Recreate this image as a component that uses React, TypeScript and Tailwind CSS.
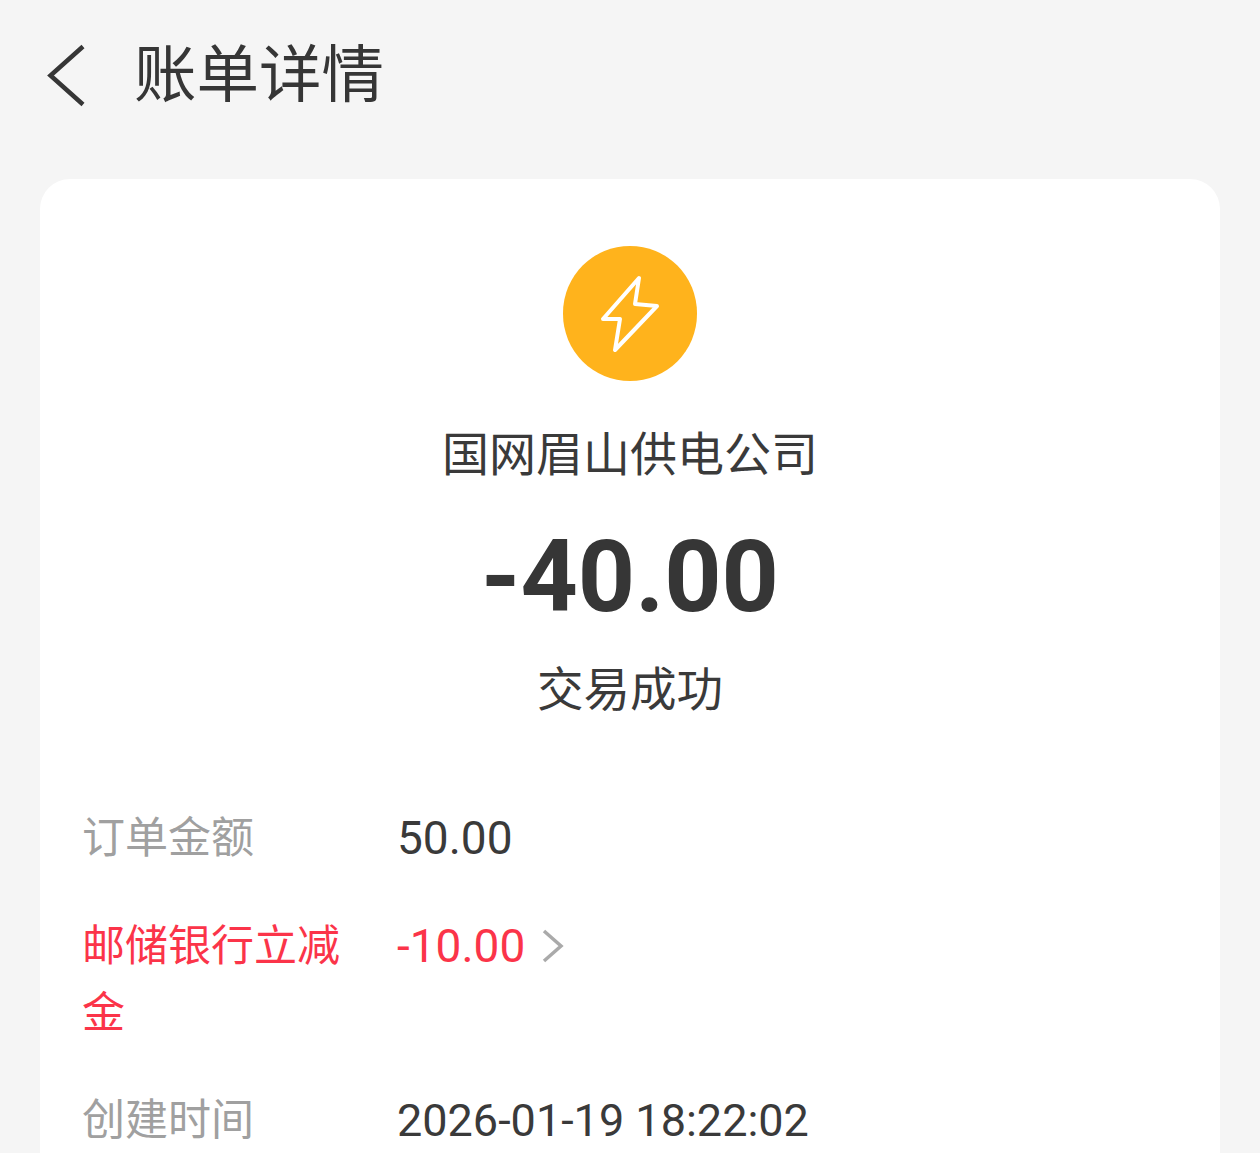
import React from "react";

const font = { fontFamily: '"Roboto", "Noto Sans CJK SC", sans-serif' };

const Row = ({ label, value, red, arrow, small }: { label: string; value: string; red?: boolean; arrow?: boolean; small?: boolean }) => (
  <div className={`flex items-start pb-[40.5px] text-[43px] leading-[67px] ${red ? "text-[#fb3449]" : ""}`}>
    <div className={`w-[315px] shrink-0 pr-[50px] break-all ${red ? "" : "text-[#a0a0a0]"}`}>{label}</div>
    <div className={`flex items-center ${small ? "text-[45px]" : "text-[46px]"} ${red ? "" : "text-[#3a3a3a]"}`}>
      <span>{value}</span>
      {arrow && (
        <svg width="24" height="36" viewBox="0 0 24 36" className="ml-[16px]" fill="none">
          <path d="M3 3 L20 18 L3 33" stroke="#aaaaaa" strokeWidth="3.5" />
        </svg>
      )}
    </div>
  </div>
);

export default function App() {
  return (
    <div className="h-[1153px] overflow-hidden bg-[#f5f5f5]" style={font}>
      <div className="flex items-center h-[179px] pb-[28px] pl-[47px]">
        <svg width="40" height="64" viewBox="0 0 40 64" fill="none">
          <path d="M36 2.5 L3.5 31.5 L36 60.5" stroke="#363636" strokeWidth="4.5" />
        </svg>
        <div className="ml-[47px] text-[62.5px] leading-[72px] text-[#363636]">账单详情</div>
      </div>

      <div className="mx-[40px] rounded-[30px] bg-white px-[42px] pt-[67px]">
        <div className="flex flex-col items-center">
          <div className="flex h-[135px] w-[134px] items-center justify-center rounded-full bg-[#ffb31c]">
            <svg width="134" height="134" viewBox="0 0 134 134" fill="none">
              <path
                d="M76 31 L72 57 L94 59 L52 103 L57 72 L40 72 Z"
                stroke="white"
                strokeWidth="4"
                strokeLinejoin="round"
              />
            </svg>
          </div>
          <div className="mt-[41px] text-[47px] leading-[66px] text-[#3a3a3a]">国网眉山供电公司</div>
          <div className="mt-[34px] text-[100px] leading-[110px] font-bold text-[#363636]">-40.00</div>
          <div className="mt-[26px] text-[46.5px] leading-[64px] text-[#3a3a3a]">交易成功</div>
        </div>

        <div className="mt-[83px]">
          <Row label="订单金额" value="50.00" />
          <Row label="邮储银行立减金" value="-10.00" red arrow />
          <Row label="创建时间" value="2026-01-19 18:22:02" small />
        </div>
      </div>
    </div>
  );
}
